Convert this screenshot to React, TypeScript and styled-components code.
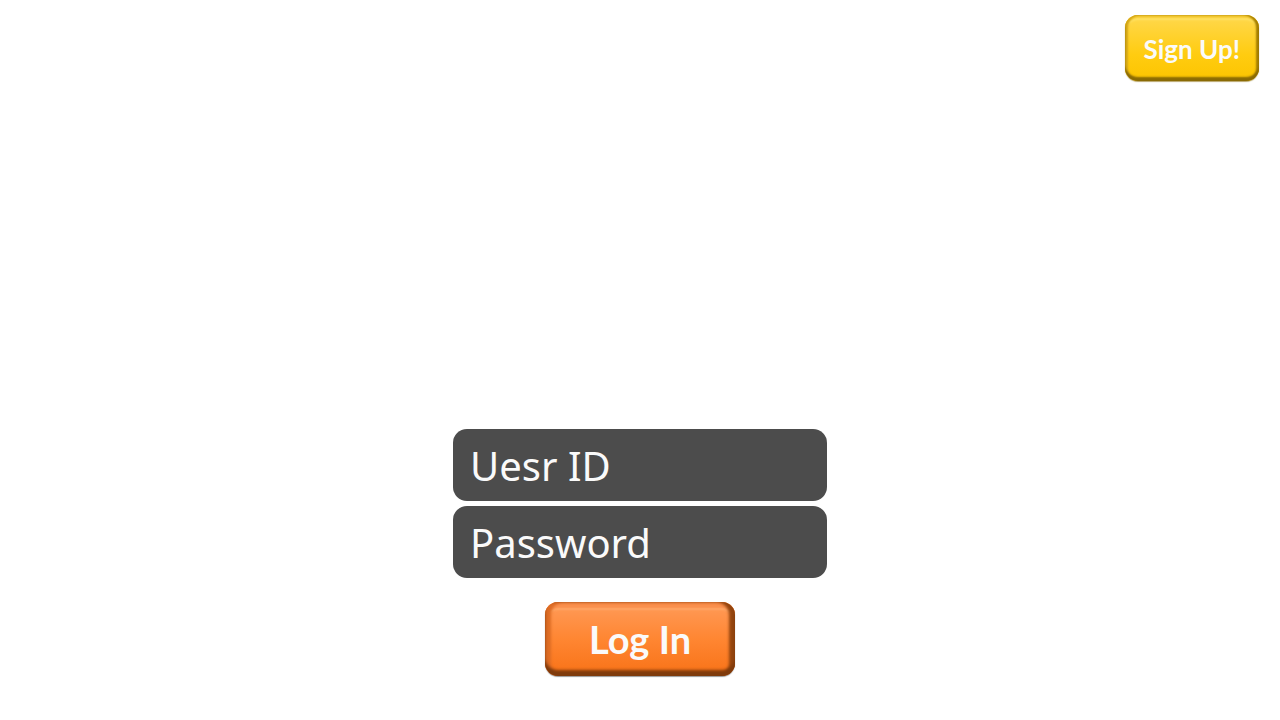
import React from "react";
import styled, { createGlobalStyle } from "styled-components";

const GlobalStyle = createGlobalStyle`
  * { box-sizing: border-box; }
  body { margin: 0; background: #fff; }
`;

const Page = styled.div`
  min-height: 100vh;
  display: flex;
  flex-direction: column;
  font-family: Lato, sans-serif;
`;

const Header = styled.header`
  display: flex;
  justify-content: flex-end;
  padding: 15px 21px;
`;

const Main = styled.main`
  flex: 1;
  display: flex;
  flex-direction: column;
  justify-content: flex-end;
  align-items: center;
  padding: 0 16px 44px;
`;

const LoginForm = styled.form`
  width: 100%;
  max-width: 374px;
  display: flex;
  flex-direction: column;
  align-items: center;
  gap: 24px;
`;

const Fields = styled.div`
  width: 100%;
  display: flex;
  flex-direction: column;
  gap: 5px;
`;

const Field = styled.input`
  width: 100%;
  height: 72px;
  padding: 0 17px;
  border: 0;
  border-radius: 14px;
  background: #4c4c4c;
  color: #fff;
  font-family: "Noto Sans", sans-serif;
  font-size: 40px;
  line-height: 48px;
  &::placeholder { color: #fafafa; opacity: 1; }
`;

const BevelButton = styled.button`
  display: flex;
  align-items: center;
  justify-content: center;
  border: 0;
  border-radius: 13px;
  color: #fafafa;
  font-family: inherit;
  font-weight: 700;
  cursor: pointer;
`;

const SignUpButton = styled(BevelButton)`
  height: 66px;
  padding: 2px 19px 0;
  font-size: 26px;
  line-height: 32px;
  background: linear-gradient(#ffd644 10%, #ffcc10 60%, #fcc400);
  box-shadow:
    inset 0 -4px 2px #8a6a04,
    inset -3px 0 2px #a67f00,
    inset 3px 0 2px #d6a818,
    inset 0 3px 2px #f6cb34,
    inset 0 5px 2px #ffe468,
    0 1px 1px #b8a66a;
`;

const LogInButton = styled(BevelButton)`
  width: 190px;
  height: 74px;
  padding: 0;
  font-size: 38px;
  line-height: 46px;
  background: linear-gradient(#ff9650 12%, #ff8632 50%, #f9751b 92%);
  box-shadow:
    inset 0 -6px 3px #7f3b0c,
    inset -6px 0 3px #94450f,
    inset 6px 0 3px #dd6c25,
    inset 0 6px 2px #fa8f4c,
    inset 0 8px 2px #ffa968,
    0 1px 1px #999;
`;

export default function App() {
  return (
    <Page>
      <GlobalStyle />
      <Header>
        <SignUpButton type="button">Sign Up!</SignUpButton>
      </Header>
      <Main>
        <LoginForm onSubmit={(event: React.FormEvent) => event.preventDefault()}>
          <Fields>
            <Field type="text" name="userId" aria-label="Uesr ID" placeholder="Uesr ID" autoComplete="username" />
            <Field type="password" name="password" aria-label="Password" placeholder="Password" autoComplete="current-password" />
          </Fields>
          <LogInButton type="submit">Log In</LogInButton>
        </LoginForm>
      </Main>
    </Page>
  );
}
